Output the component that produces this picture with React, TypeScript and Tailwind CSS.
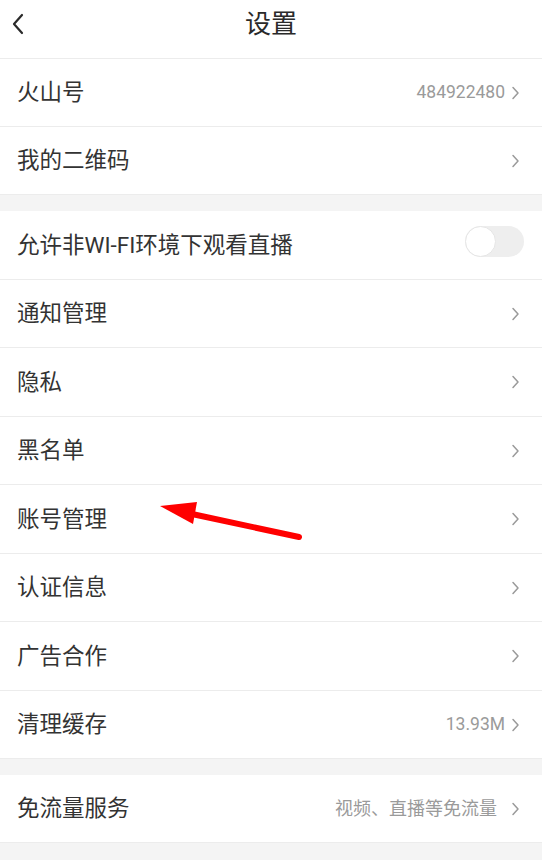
import { useState } from 'react';

type Row = { label: string; value?: string; toggle?: boolean; arrow?: boolean };

const sections: Row[][] = [
  [
    { label: '火山号', value: '484922480' },
    { label: '我的二维码' },
  ],
  [
    { label: '允许非WI-FI环境下观看直播', toggle: true },
    { label: '通知管理' },
    { label: '隐私' },
    { label: '黑名单' },
    { label: '账号管理', arrow: true },
    { label: '认证信息' },
    { label: '广告合作' },
    { label: '清理缓存', value: '13.93M' },
  ],
  [{ label: '免流量服务', value: '视频、直播等免流量' }],
];

function Chevron() {
  return (
    <svg width="9" height="14" viewBox="0 0 9 14" fill="none" className="ml-1.5 shrink-0">
      <path d="M2 1.5 L7 7 L2 12.5" stroke="#9a9a9a" strokeWidth="1.5" strokeLinecap="round" strokeLinejoin="round" />
    </svg>
  );
}

function Toggle() {
  const [on, setOn] = useState(false);
  return (
    <button
      onClick={() => setOn(!on)}
      className={`relative w-[59px] h-[31px] rounded-full ${on ? 'bg-[#ff2c55]' : 'bg-[#eeeeee]'}`}
    >
      <span
        className={`absolute top-0 w-[31px] h-[31px] rounded-full bg-white border border-[#e6e6e6] ${on ? 'right-0' : 'left-0'}`}
      />
    </button>
  );
}

export default function App() {
  return (
    <div
      className="w-[542px] h-[860px] bg-[#f4f4f4] overflow-hidden"
      style={{ fontFamily: 'Roboto, "Noto Sans CJK SC", sans-serif' }}
    >
      {/* Header */}
      <div className="relative h-[59px] bg-white border-b border-[#ececec] flex items-center justify-center">
        <svg width="14" height="22" viewBox="0 0 14 22" fill="none" className="absolute left-[11px] top-[13px]">
          <path d="M11 2 L3 11 L11 20" stroke="#2a2a2a" strokeWidth="2.2" strokeLinecap="round" strokeLinejoin="round" />
        </svg>
        <span className="text-[26px] text-[#2a2a2a] leading-none -mt-[10px]">设置</span>
      </div>

      {sections.map((rows, si) => (
        <div key={si} className={`bg-white ${si > 0 ? 'mt-4' : ''}`}>
          {rows.map((row, ri) => (
            <div
              key={row.label}
              className={`relative ${si === 1 && ri % 2 === 0 ? 'h-[69px]' : 'h-[68px]'} pl-[17px] pr-[22px] flex items-center justify-between border-b border-[#ececec]`}
            >
              <span className="text-[22.5px] text-[#333333] leading-none">{row.label}</span>
              {row.toggle ? (
                <div className="-mr-[4px]">
                  <Toggle />
                </div>
              ) : (
                <div className="flex items-center">
                  {row.value && (
                    <span className={`text-[#9a9a9a] leading-none ${/\d/.test(row.value) ? 'text-[17.5px]' : 'text-[18px] mr-2'}`}>
                      {row.value}
                    </span>
                  )}
                  <Chevron />
                </div>
              )}
              {row.arrow && (
                <svg width="160" height="50" viewBox="0 0 160 50" className="absolute left-[150px] top-[10px]">
                  <line x1="42" y1="19" x2="149" y2="42" stroke="#ff0000" strokeWidth="6" strokeLinecap="round" />
                  <polygon points="10,11 47,7 43,29" fill="#ff0000" />
                </svg>
              )}
            </div>
          ))}
        </div>
      ))}
    </div>
  );
}
